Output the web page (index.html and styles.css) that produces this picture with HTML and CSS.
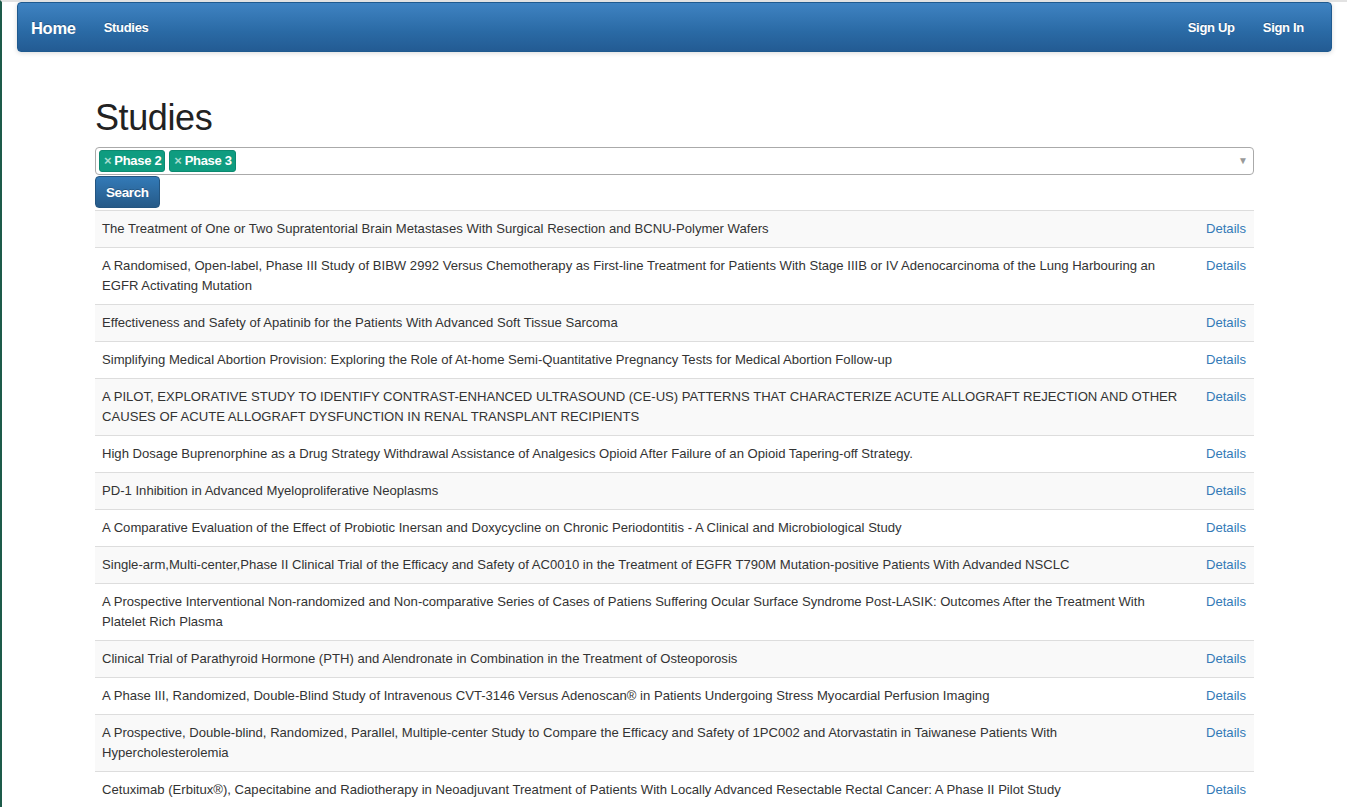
FILE: index.html
```html
<!DOCTYPE html>
<html>
<head>
<meta charset="utf-8">
<title>Studies</title>
<link rel="stylesheet" href="styles.css">
</head>
<body>
<nav class="navbar">
  <div class="nav-left">
    <a class="brand" href="#">Home</a>
    <a class="nav-link" href="#">Studies</a>
  </div>
  <div class="nav-right">
    <a class="nav-link" href="#">Sign Up</a>
    <a class="nav-link" href="#">Sign In</a>
  </div>
</nav>
<main class="container">
  <h1>Studies</h1>
  <div class="select">
    <span class="tag"><span class="tag-x">×</span>Phase 2</span>
    <span class="tag"><span class="tag-x">×</span>Phase 3</span>
    <span class="caret">▼</span>
  </div>
  <button class="btn">Search</button>
  <table class="table">
    <tbody>
      <tr><td>The Treatment of One or Two Supratentorial Brain Metastases With Surgical Resection and BCNU-Polymer Wafers</td><td class="act"><a href="#">Details</a></td></tr>
      <tr><td>A Randomised, Open-label, Phase III Study of BIBW 2992 Versus Chemotherapy as First-line Treatment for Patients With Stage IIIB or IV Adenocarcinoma of the Lung Harbouring an EGFR Activating Mutation</td><td class="act"><a href="#">Details</a></td></tr>
      <tr><td>Effectiveness and Safety of Apatinib for the Patients With Advanced Soft Tissue Sarcoma</td><td class="act"><a href="#">Details</a></td></tr>
      <tr><td>Simplifying Medical Abortion Provision: Exploring the Role of At-home Semi-Quantitative Pregnancy Tests for Medical Abortion Follow-up</td><td class="act"><a href="#">Details</a></td></tr>
      <tr><td>A PILOT, EXPLORATIVE STUDY TO IDENTIFY CONTRAST-ENHANCED ULTRASOUND (CE-US) PATTERNS THAT CHARACTERIZE ACUTE ALLOGRAFT REJECTION AND OTHER CAUSES OF ACUTE ALLOGRAFT DYSFUNCTION IN RENAL TRANSPLANT RECIPIENTS</td><td class="act"><a href="#">Details</a></td></tr>
      <tr><td>High Dosage Buprenorphine as a Drug Strategy Withdrawal Assistance of Analgesics Opioid After Failure of an Opioid Tapering-off Strategy.</td><td class="act"><a href="#">Details</a></td></tr>
      <tr><td>PD-1 Inhibition in Advanced Myeloproliferative Neoplasms</td><td class="act"><a href="#">Details</a></td></tr>
      <tr><td>A Comparative Evaluation of the Effect of Probiotic Inersan and Doxycycline on Chronic Periodontitis - A Clinical and Microbiological Study</td><td class="act"><a href="#">Details</a></td></tr>
      <tr><td>Single-arm,Multi-center,Phase II Clinical Trial of the Efficacy and Safety of AC0010 in the Treatment of EGFR T790M Mutation-positive Patients With Advanded NSCLC</td><td class="act"><a href="#">Details</a></td></tr>
      <tr><td>A Prospective Interventional Non-randomized and Non-comparative Series of Cases of Patiens Suffering Ocular Surface Syndrome Post-LASIK: Outcomes After the Treatment With Platelet Rich Plasma</td><td class="act"><a href="#">Details</a></td></tr>
      <tr><td>Clinical Trial of Parathyroid Hormone (PTH) and Alendronate in Combination in the Treatment of Osteoporosis</td><td class="act"><a href="#">Details</a></td></tr>
      <tr><td>A Phase III, Randomized, Double-Blind Study of Intravenous CVT-3146 Versus Adenoscan® in Patients Undergoing Stress Myocardial Perfusion Imaging</td><td class="act"><a href="#">Details</a></td></tr>
      <tr><td>A Prospective, Double-blind, Randomized, Parallel, Multiple-center Study to Compare the Efficacy and Safety of 1PC002 and Atorvastatin in Taiwanese Patients With Hypercholesterolemia</td><td class="act"><a href="#">Details</a></td></tr>
      <tr><td>Cetuximab (Erbitux®), Capecitabine and Radiotherapy in Neoadjuvant Treatment of Patients With Locally Advanced Resectable Rectal Cancer: A Phase II Pilot Study</td><td class="act"><a href="#">Details</a></td></tr>
    </tbody>
  </table>
</main>
</body>
</html>
```

FILE: styles.css
```css
html, body {
  margin: 0;
  padding: 0;
}
body {
  font-family: "Liberation Sans", Arial, Helvetica, sans-serif;
  font-size: 13px;
  line-height: 20px;
  color: #333;
  background: #fff;
  border-left: 2px solid #1d5b4a;
  border-top: 2px solid #e2e2e2;
  min-height: 805px;
  box-sizing: border-box;
}
a {
  text-decoration: none;
}
.navbar {
  margin: 0 15px 0 15px;
  height: 50px;
  box-sizing: border-box;
  display: flex;
  justify-content: space-between;
  align-items: center;
  background: linear-gradient(to bottom, #3f83c2 0%, #2a6aa5 60%, #235b93 100%);
  border: 1px solid #1f5a8f;
  border-radius: 4px;
  box-shadow: 0 1px 5px rgba(0,0,0,0.15);
  padding: 1px 27px 0 13px;
}
.nav-left, .nav-right {
  display: flex;
  align-items: center;
}
.brand {
  color: #fff;
  font-size: 16.5px;
  font-weight: bold;
  letter-spacing: -0.3px;
  text-shadow: 0 -1px 0 rgba(0,0,0,0.25);
  margin-right: 28px;
}
.nav-link {
  color: #fff;
  font-size: 13px;
  font-weight: bold;
  letter-spacing: -0.3px;
  text-shadow: 0 -1px 0 rgba(0,0,0,0.25);
}
.nav-right .nav-link + .nav-link {
  margin-left: 28px;
}
.container {
  width: 1159px;
  margin: 0 auto;
}
h1 {
  font-size: 36px;
  font-weight: 500;
  line-height: 40px;
  margin: 46px 0 9px;
  color: #222;
  letter-spacing: -0.4px;
}
.select {
  position: relative;
  height: 28px;
  box-sizing: border-box;
  border: 1px solid #aaa;
  border-radius: 4px;
  display: flex;
  align-items: center;
  padding: 0 3px;
  gap: 4px;
}
.tag {
  background: #0f9c80;
  color: #fff;
  font-size: 13px;
  font-weight: bold;
  line-height: 18px;
  padding: 1px 3px 1px 4px;
  border-radius: 3px;
  border: 1px solid #0c8a70;
  letter-spacing: -0.3px;
}
.tag-x {
  color: #a8dccf;
  font-weight: bold;
  margin-right: 3px;
}
.caret {
  position: absolute;
  right: 5px;
  top: 6px;
  font-size: 10px;
  line-height: 14px;
  color: #999;
}
.btn {
  display: block;
  margin-top: 1px;
  height: 32px;
  padding: 0 10px;
  font-family: inherit;
  font-size: 13.5px;
  font-weight: bold;
  color: #fff;
  background: linear-gradient(to bottom, #337ab7 0%, #265a88 100%);
  border: 1px solid #245580;
  border-radius: 4px;
  letter-spacing: -0.4px;
  text-shadow: 0 -1px 0 rgba(0,0,0,0.2);
}
.table {
  width: 100%;
  border-collapse: collapse;
  margin-top: 2px;
  font-size: 13.1px;
}
.table td {
  padding: 8px 7px;
  border-top: 1px solid #ddd;
  vertical-align: top;
  line-height: 20px;
}
.table tr:nth-child(odd) td {
  background: #f9f9f9;
}
.table td.act {
  width: 39px;
  padding-left: 20px;
  padding-right: 8px;
  white-space: nowrap;
}
.table td.act a {
  color: #337ab7;
}
```
